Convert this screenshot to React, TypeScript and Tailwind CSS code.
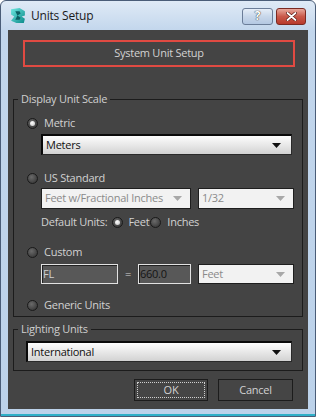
import React from "react";

const font = { fontFamily: '"Open Sans", "Segoe UI", sans-serif' };

function Radio({ checked }: { checked?: boolean }) {
  return (
    <span className="relative inline-flex h-[11px] w-[11px] items-center justify-center rounded-full border border-[#1a1a1a] bg-[radial-gradient(circle_at_40%_35%,#6a6a6a,#2e2e2e)]">
      {checked && <span className="h-[5px] w-[5px] rounded-full bg-[radial-gradient(circle_at_40%_35%,#ffffff,#bdbdbd)]" />}
    </span>
  );
}

function Arrow({ color }: { color: string }) {
  return (
    <svg width="9" height="5" viewBox="0 0 9 5" className="shrink-0">
      <path d="M0 0 H9 L4.5 5 Z" fill={color} />
    </svg>
  );
}

function Select({ text, w, h = 21, disabled }: { text: string; w: number; h?: number; disabled?: boolean }) {
  if (disabled) {
    return (
      <div
        className="flex items-center justify-between whitespace-nowrap border border-[#1e1e1e] bg-[#f2f2f2] pl-[3px] pr-[8px] text-[11px] tracking-[-0.25px] text-[#8a8a8a]"
        style={{ width: w, height: h }}
      >
        <span>{text}</span>
        <Arrow color="#a8a8a8" />
      </div>
    );
  }
  return (
    <div
      className="flex items-center justify-between whitespace-nowrap border-t-2 border-l-2 border-b border-r border-t-[#0a0a0a] border-l-[#0a0a0a] border-b-[#2a2a2a] border-r-[#2a2a2a] bg-[linear-gradient(#fdfdfd,#e8e8e8_50%,#d2d2d2)] pl-[3px] pr-[10px] text-[11px] tracking-[-0.25px] text-[#101010]"
      style={{ width: w, height: h }}
    >
      <span>{text}</span>
      <Arrow color="#101010" />
    </div>
  );
}

function Group({ title, h, children }: { title: string; h: number; children: React.ReactNode }) {
  return (
    <div className="ml-[5px] w-[290px] border border-[#1c1c1c]" style={{ height: h }}>
      <div className="-mt-[9px] ml-[4px] flex">
        <span className="whitespace-nowrap bg-[#444444] px-[3px] text-[11px] leading-[16px] tracking-[-0.25px] text-[#cfcfcf]">{title}</span>
      </div>
      {children}
    </div>
  );
}

const label = "text-[11px] tracking-[-0.25px] text-[#d2d2d2]";

export default function App() {
  return (
    <div className="h-[417px] w-[316px] overflow-hidden bg-[#fff]" style={font}>
      <div className="flex h-[417px] w-[316px] flex-col rounded-t-[6px] border border-[#4a5d78] bg-[linear-gradient(#dfeaf6,#c2d6ec_30px,#bcd2ea)]">
        {/* title bar */}
        <div className="flex h-[29px] shrink-0 items-center">
          <svg className="ml-[9px]" width="17" height="17" viewBox="0 0 16 16">
            <defs>
              <linearGradient id="lg" x1="0" y1="0" x2="1" y2="1">
                <stop offset="0" stopColor="#6ee8e0" />
                <stop offset="1" stopColor="#0b8a8a" />
              </linearGradient>
            </defs>
            <path d="M1 2 L9 1 L14 4 L14 8 L11 9 L14 11 L13 15 L6 15 L1 13 L4 9 L1 7 Z" fill="url(#lg)" />
            <path d="M5 4 L9 4 L10 6 L7 8 L10 10 L9 12 L5 12 L7 8 Z" fill="#0d5f63" />
          </svg>
          <span className="ml-[4px] text-[12px] tracking-[-0.2px] text-[#1a1a1a]">Units Setup</span>
          <div className="ml-auto mr-[9px] mt-[1px] flex gap-[3px]">
            <div className="flex h-[17px] w-[31px] items-center justify-center rounded-[3px] border border-[#6b7d98] bg-[linear-gradient(#e6eef8,#c8d7ea_50%,#b4c8e2)]">
              <span className="text-[12px] font-bold leading-none text-white [text-shadow:0_0_1px_#333,0_0_1px_#333]">?</span>
            </div>
            <div className="flex h-[17px] w-[30px] items-center justify-center rounded-[3px] border border-[#7a2a22] bg-[linear-gradient(#e8a89c,#c9594a_50%,#b83a2c)]">
              <svg width="11" height="9" viewBox="0 0 11 9">
                <path d="M1.5 1 L9.5 8 M9.5 1 L1.5 8" stroke="#5a1a14" strokeWidth="3.2" strokeLinecap="round" />
                <path d="M1.5 1 L9.5 8 M9.5 1 L1.5 8" stroke="#ffffff" strokeWidth="1.8" strokeLinecap="round" />
              </svg>
            </div>
          </div>
        </div>

        {/* client */}
        <div className="ml-[7px] h-[379px] w-[300px] bg-[#444444]">
          <div className={`ml-[15px] mt-[10px] flex h-[27px] w-[272px] items-center justify-center border-2 border-[#e04a42] ${label}`}>
            System Unit Setup
          </div>

          <div className="mt-[32px]">
            <Group title="Display Unit Scale" h={218}>
              <div className={`ml-[13px] mt-[8px] flex h-[16px] items-center gap-[6px] ${label}`}>
                <Radio checked />
                <span>Metric</span>
              </div>
              <div className="ml-[27px] mt-[3px]">
                <Select text="Meters" w={251} h={21} />
              </div>
              <div className={`ml-[13px] mt-[15px] flex h-[16px] items-center gap-[6px] ${label}`}>
                <Radio />
                <span>US Standard</span>
              </div>
              <div className="ml-[27px] mt-[2px] flex gap-[7px]">
                <Select text="Feet w/Fractional Inches" w={150} h={21} disabled />
                <Select text="1/32" w={96} h={21} disabled />
              </div>
              <div className={`ml-[27px] mt-[5px] flex h-[16px] items-center whitespace-nowrap ${label}`}>
                <span>Default Units:</span>
                <span className="ml-[5px] flex"><Radio checked /></span>
                <span className="ml-[5px]">Feet</span>
                <span className="ml-[1px] flex"><Radio /></span>
                <span className="ml-[6px]">Inches</span>
              </div>
              <div className={`ml-[13px] mt-[14px] flex h-[16px] items-center gap-[6px] ${label}`}>
                <Radio />
                <span>Custom</span>
              </div>
              <div className="ml-[27px] mt-[4px] flex items-center">
                <div className="flex h-[20px] w-[77px] items-center border border-[#e2e2e2] bg-[#585858] pl-[1px] text-[11px] tracking-[-0.25px] text-[#cfcfcf] shadow-[inset_1px_1px_0_#222]">
                  FL
                </div>
                <span className={`w-[20px] text-center ${label}`}>=</span>
                <div className="flex h-[20px] w-[53px] items-center border border-[#e2e2e2] bg-[#585858] pl-[1px] text-[11px] tracking-[-0.25px] text-[#151515] shadow-[inset_1px_1px_0_#222]">
                  660.0
                </div>
                <div className="ml-[7px]">
                  <Select text="Feet" w={96} h={20} disabled />
                </div>
              </div>
              <div className={`ml-[13px] mt-[13px] flex h-[16px] items-center gap-[6px] ${label}`}>
                <Radio />
                <span>Generic Units</span>
              </div>
            </Group>
          </div>

          <div className="mt-[12px]">
            <Group title="Lighting Units" h={42}>
              <div className="ml-[12px] mt-[4px]">
                <Select text="International" w={266} h={21} />
              </div>
            </Group>
          </div>

          <div className="mt-[8px] flex">
            <div className="ml-[126px] flex h-[22px] w-[74px] items-center justify-center border border-[#1c1c1c] bg-[#454545] p-[2px]">
              <div className={`flex h-full w-full items-center justify-center border border-dotted border-[#cfcfcf] ${label}`}>
                OK
              </div>
            </div>
            <div className={`ml-[10px] flex h-[22px] w-[75px] items-center justify-center border border-[#1c1c1c] bg-[#454545] ${label}`}>
              Cancel
            </div>
          </div>
        </div>
        <div className="flex-1 border-b-2 border-b-[#2fb0c8]" />
      </div>
    </div>
  );
}
